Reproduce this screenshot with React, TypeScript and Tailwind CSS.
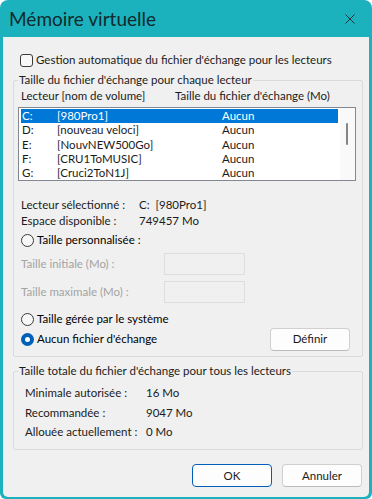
import React from 'react'

const drives = [
  { letter: 'C:', name: '[980Pro1]', size: 'Aucun', selected: true },
  { letter: 'D:', name: '[nouveau veloci]', size: 'Aucun' },
  { letter: 'E:', name: '[NouvNEW500Go]', size: 'Aucun' },
  { letter: 'F:', name: '[CRU1ToMUSIC]', size: 'Aucun' },
  { letter: 'G:', name: '[Cruci2ToN1J]', size: 'Aucun' },
]

function Radio({ checked }: { checked?: boolean }) {
  if (checked) {
    return (
      <span className="w-[13px] h-[13px] rounded-full bg-[#005fb8] flex items-center justify-center shrink-0">
        <span className="w-[5px] h-[5px] rounded-full bg-white" />
      </span>
    )
  }
  return <span className="w-[13px] h-[13px] rounded-full border border-[#3a3a3a] bg-[#f7f7f7] shrink-0" />
}

function Button({ label, primary }: { label: string; primary?: boolean }) {
  return (
    <button
      className={
        primary
          ? 'w-[80px] h-[23px] rounded-[4px] border border-[#005fb8] bg-[#fdfdfd] text-[11.5px] leading-none'
          : 'w-[80px] h-[23px] rounded-[4px] border border-[#d0d0d0] border-b-[#bcbcbc] bg-[#fdfdfd] text-[11.5px] leading-none'
      }
    >
      {label}
    </button>
  )
}

export default function App() {
  return (
    <div className="w-[372px] h-[499px] bg-white font-['Lato',sans-serif] text-[11.5px] text-[#1b1b1b]">
      <div className="h-full flex flex-col bg-[#1cb2bd] rounded-t-[8px] rounded-b-[6px] px-[3px] pb-[2px]">
        {/* title bar */}
        <div className="h-[37px] shrink-0 flex items-center justify-between pl-[6px] pr-[14px]">
          <span className="text-[19px] leading-[24px] text-[#0f2a2e]">Mémoire virtuelle</span>
          <svg width="10" height="10" viewBox="0 0 10 10" className="text-[#1d3336]">
            <path d="M0.5 0.5L9.5 9.5M9.5 0.5L0.5 9.5" stroke="currentColor" strokeWidth="1" />
          </svg>
        </div>

        <div className="flex-1 bg-[#f0f0f0] rounded-b-[5px] flex flex-col pl-[10px] pr-[6px]">
          {/* auto checkbox */}
          <label className="mt-[15px] h-[16px] flex items-center pl-[7px] gap-[3px]">
            <span className="w-[13px] h-[13px] rounded-[3px] border border-[#3a3a3a] bg-[#f7f7f7]" />
            <span className="leading-[16px] whitespace-nowrap">Gestion automatique du fichier d'échange pour les lecteurs</span>
          </label>

          {/* per drive */}
          <fieldset className="mt-[4px] border border-[#dadada] rounded-[2px] pb-[6px]">
            <legend className="ml-[4px] px-[1px] leading-[16px] whitespace-nowrap">Taille du fichier d'échange pour chaque lecteur</legend>
            <div className="h-[16px] flex pl-[7px] leading-[16px] whitespace-nowrap">
              <span className="w-[154px]">Lecteur [nom de volume]</span>
              <span>Taille du fichier d'échange (Mo)</span>
            </div>
            <div className="ml-[4px] mt-[3px] w-[338px] h-[74px] border border-[#828790] bg-white flex">
              <div className="w-[321px] pl-[2px] pt-[1px]">
                {drives.map((d) => (
                  <div
                    key={d.letter}
                    className={
                      d.selected
                        ? 'w-[317px] h-[14.3px] flex items-center bg-[#0078d7] text-white leading-[14px] whitespace-nowrap'
                        : 'w-[317px] h-[14.3px] flex items-center leading-[14px] whitespace-nowrap'
                    }
                  >
                    <span className="pl-[1px] w-[36px]">{d.letter}</span>
                    <span className="w-[165px]">{d.name}</span>
                    <span>{d.size}</span>
                  </div>
                ))}
              </div>
              <div className="flex-1 bg-[#f9f9f9] pt-[15px] pl-[6px]">
                <div className="w-[2px] h-[22px] rounded-full bg-[#858585]" />
              </div>
            </div>

            <div className="mt-[16px] pl-[7px] leading-[16px] whitespace-nowrap">
              <div className="flex">
                <span className="w-[118px]">Lecteur sélectionné :</span>
                <span>C:&nbsp;&nbsp;[980Pro1]</span>
              </div>
              <div className="flex">
                <span className="w-[118px]">Espace disponible :</span>
                <span>749457 Mo</span>
              </div>
            </div>

            <div className="mt-[3px] h-[16px] pl-[7px] flex items-center gap-[3px] text-black">
              <Radio />
              <span className="leading-[16px]">Taille personnalisée :</span>
            </div>

            <div className="mt-[5px] pl-[7px] flex items-center text-[#a3a3a3] whitespace-nowrap">
              <span className="w-[143px]">Taille initiale (Mo) :</span>
              <span className="w-[81px] h-[22px] border border-[#dddddd] bg-[#f0f0f0]" />
            </div>
            <div className="mt-[6px] pl-[7px] flex items-center text-[#a3a3a3] whitespace-nowrap">
              <span className="w-[143px]">Taille maximale (Mo) :</span>
              <span className="w-[81px] h-[22px] border border-[#dddddd] bg-[#f0f0f0]" />
            </div>

            <div className="mt-[8px] h-[16px] pl-[7px] flex items-center gap-[3px] text-black">
              <Radio />
              <span className="leading-[16px]">Taille gérée par le système</span>
            </div>
            <div className="mt-[1px] h-[22px] pl-[7px] pr-[12px] flex items-center justify-between">
              <div className="flex items-center gap-[3px] text-black">
                <Radio checked />
                <span className="leading-[16px]">Aucun fichier d'échange</span>
              </div>
              <Button label="Définir" />
            </div>
          </fieldset>

          {/* totals */}
          <fieldset className="mt-[6px] border border-[#dadada] rounded-[2px] pb-[9px]">
            <legend className="ml-[4px] px-[1px] leading-[16px] whitespace-nowrap">Taille totale du fichier d'échange pour tous les lecteurs</legend>
            <div className="mt-[6px] pl-[11px] flex leading-[16px] whitespace-nowrap">
              <span className="w-[121px]">Minimale autorisée :</span>
              <span>16 Mo</span>
            </div>
            <div className="mt-[4px] pl-[11px] flex leading-[16px] whitespace-nowrap">
              <span className="w-[121px]">Recommandée :</span>
              <span>9047 Mo</span>
            </div>
            <div className="mt-[3px] pl-[11px] flex leading-[16px] whitespace-nowrap">
              <span className="w-[121px]">Allouée actuellement :</span>
              <span>0 Mo</span>
            </div>
          </fieldset>

          <div className="mt-[14px] pr-[1px] flex justify-end gap-[10px]">
            <Button label="OK" primary />
            <Button label="Annuler" />
          </div>
        </div>
      </div>
    </div>
  )
}
